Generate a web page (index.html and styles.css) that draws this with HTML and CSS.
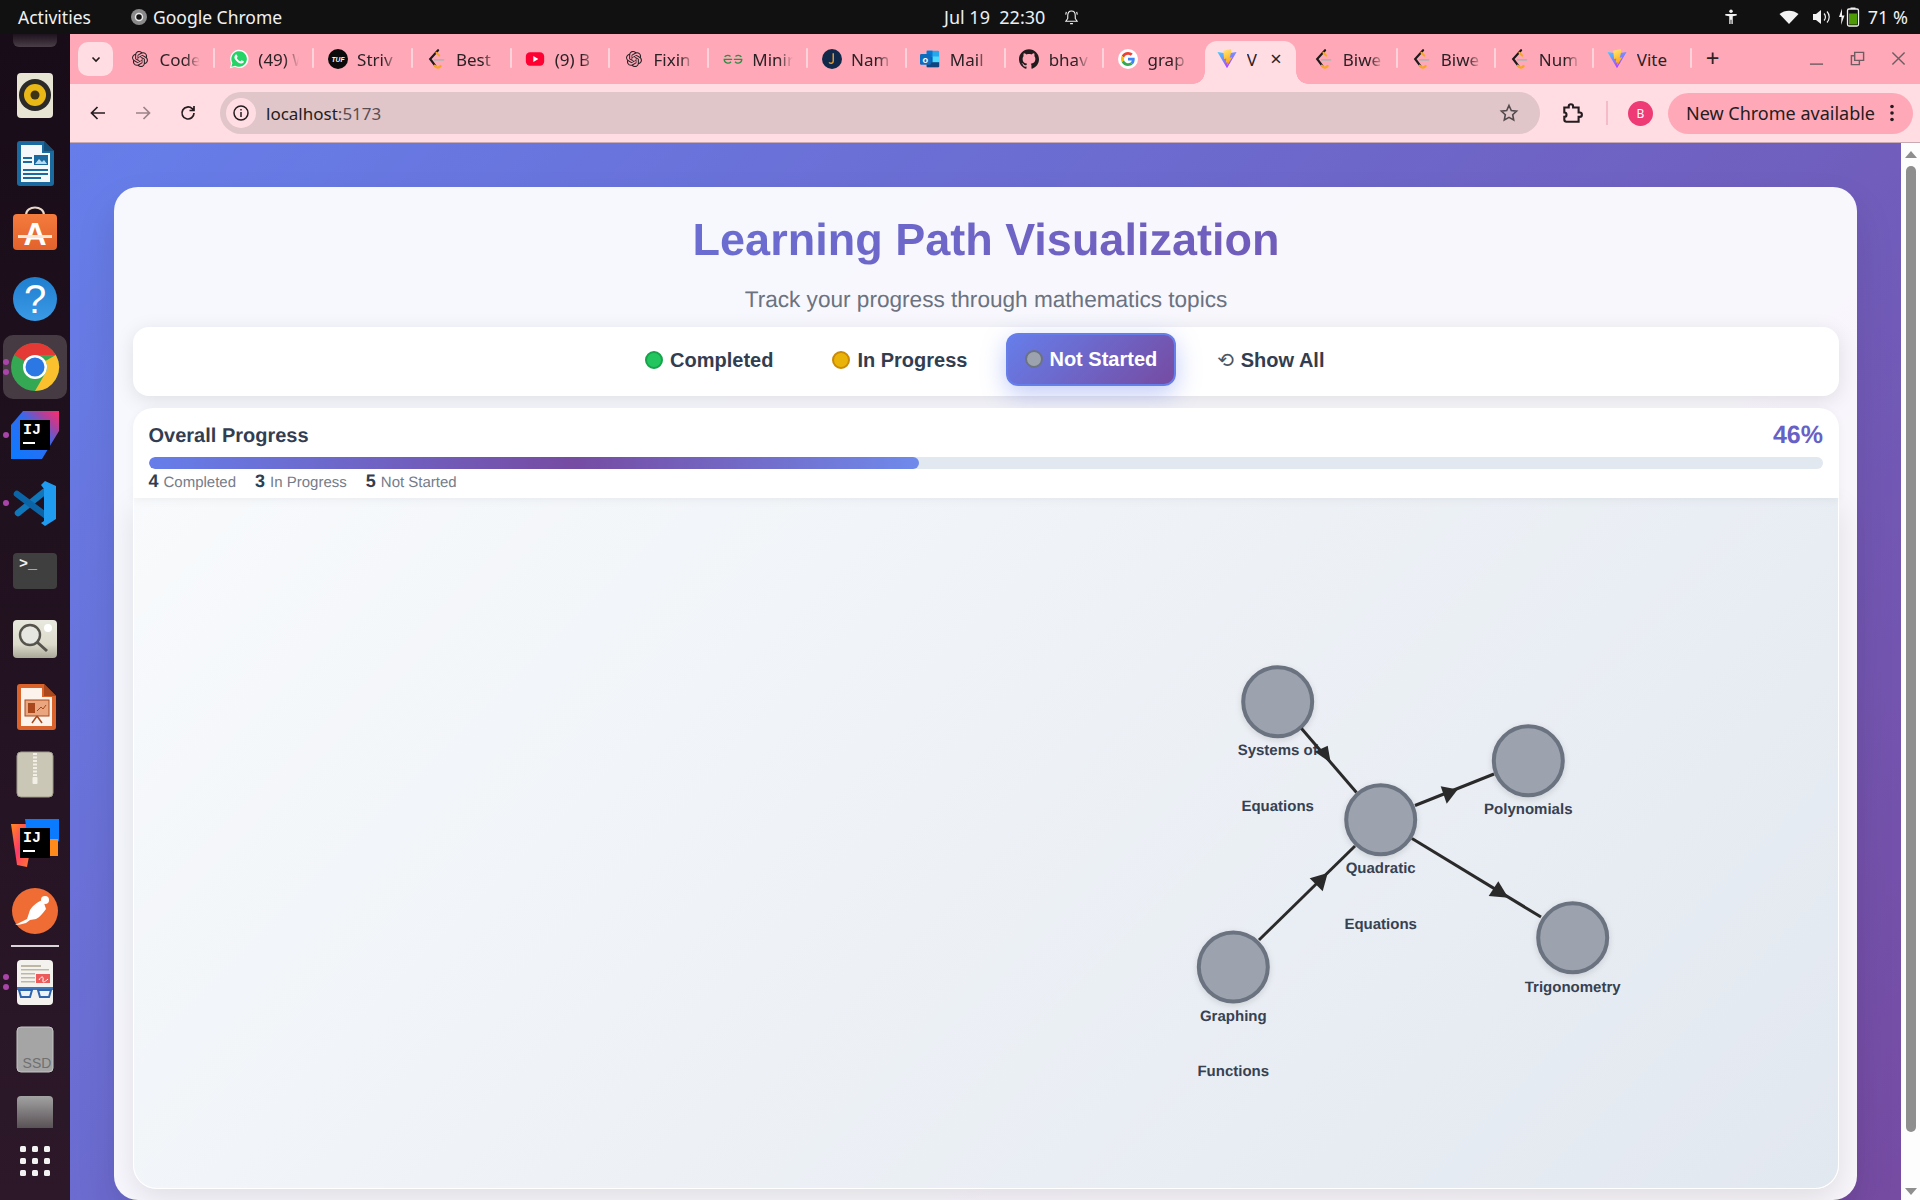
FILE: index.html
```html
<!DOCTYPE html>
<html lang="en">
<head>
<meta charset="utf-8">
<title>Learning Path Visualization</title>
<link rel="stylesheet" href="styles.css">
</head>
<body>
<svg class="defs" aria-hidden="true">
  <defs>
    <linearGradient id="ij-u" x1="0" y1="1" x2="1" y2="0"><stop offset="0" stop-color="#0a7bff"/><stop offset=".55" stop-color="#2f6cf0"/><stop offset=".8" stop-color="#b0409a"/><stop offset="1" stop-color="#ff2d6e"/></linearGradient>
    <linearGradient id="ij-c" x1="0" y1="0" x2="1" y2="1"><stop offset="0" stop-color="#ff8a1c"/><stop offset=".45" stop-color="#ff3a6a"/><stop offset="1" stop-color="#ff8a1c"/></linearGradient>
    <linearGradient id="bag" x1="0" y1="0" x2="0" y2="1"><stop offset="0" stop-color="#f47b3c"/><stop offset="1" stop-color="#e2622c"/></linearGradient>
    <linearGradient id="help" x1="0" y1="0" x2="0" y2="1"><stop offset="0" stop-color="#1f7fcf"/><stop offset="1" stop-color="#3a9ae6"/></linearGradient>
    <linearGradient id="glass" x1="0" y1="0" x2="0" y2="1"><stop offset="0" stop-color="#e9e8de"/><stop offset=".65" stop-color="#dcdacb"/><stop offset="1" stop-color="#a9a797"/></linearGradient>
    <linearGradient id="ssd2" x1="0" y1="0" x2="0" y2="1"><stop offset="0" stop-color="#a3a3a3"/><stop offset="1" stop-color="#3b3036"/></linearGradient>
    <linearGradient id="vite-a" x1="0" y1="0" x2=".6" y2="1"><stop offset="0" stop-color="#41d1ff"/><stop offset="1" stop-color="#bd34fe"/></linearGradient>
    <linearGradient id="vite-b" x1="0" y1="0" x2=".3" y2="1"><stop offset="0" stop-color="#ffea83"/><stop offset="1" stop-color="#ffa800"/></linearGradient>
    <symbol id="i-openai" viewBox="0 0 24 24"><path fill="#2b2226" d="M22.2819 9.8211a5.9847 5.9847 0 0 0-.5157-4.9108 6.0462 6.0462 0 0 0-6.5098-2.9A6.0651 6.0651 0 0 0 4.9807 4.1818a5.9847 5.9847 0 0 0-3.9977 2.9 6.0462 6.0462 0 0 0 .7427 7.0966 5.98 5.98 0 0 0 .511 4.9107 6.051 6.051 0 0 0 6.5146 2.9001A5.9847 5.9847 0 0 0 13.2599 24a6.0557 6.0557 0 0 0 5.7718-4.2058 5.9894 5.9894 0 0 0 3.9977-2.9001 6.0557 6.0557 0 0 0-.7475-7.0729zm-9.022 12.6081a4.4755 4.4755 0 0 1-2.8764-1.0408l.1419-.0804 4.7783-2.7582a.7948.7948 0 0 0 .3927-.6813v-6.7369l2.02 1.1686a.071.071 0 0 1 .038.052v5.5826a4.504 4.504 0 0 1-4.4945 4.4944zm-9.6607-4.1254a4.4708 4.4708 0 0 1-.5346-3.0137l.142.0852 4.783 2.7582a.7712.7712 0 0 0 .7806 0l5.8428-3.3685v2.3324a.0804.0804 0 0 1-.0332.0615L9.74 19.9502a4.4992 4.4992 0 0 1-6.1408-1.6464zM2.3408 7.8956a4.485 4.485 0 0 1 2.3655-1.9728V11.6a.7664.7664 0 0 0 .3879.6765l5.8144 3.3543-2.0201 1.1685a.0757.0757 0 0 1-.071 0l-4.8303-2.7865A4.504 4.504 0 0 1 2.3408 7.872zm16.5963 3.8558L13.1038 8.364 15.1192 7.2a.0757.0757 0 0 1 .071 0l4.8303 2.7913a4.4944 4.4944 0 0 1-.6765 8.1042v-5.6772a.79.79 0 0 0-.407-.667zm2.0107-3.0231l-.142-.0852-4.7735-2.7818a.7759.7759 0 0 0-.7854 0L9.409 9.2297V6.8974a.0662.0662 0 0 1 .0284-.0615l4.8303-2.7866a4.4992 4.4992 0 0 1 6.6802 4.66zM8.3065 12.863l-2.02-1.1638a.0804.0804 0 0 1-.038-.0567V6.0742a4.4992 4.4992 0 0 1 7.3757-3.4537l-.142.0805L8.704 5.459a.7948.7948 0 0 0-.3927.6813zm1.0976-2.3654l2.602-1.4998 2.6069 1.4998v2.9994l-2.5974 1.4997-2.6067-1.4997Z"/></symbol>
    <symbol id="i-wa" viewBox="0 0 24 24"><path fill="#fff" d="M1 23l1.7-6A11 11 0 1 1 7 21.4z"/><path fill="#25d366" d="M2.8 21.2l1.3-4.5A9.3 9.3 0 1 1 7.4 20z"/><path fill="#fff" d="M8.6 6.6c-.3 0-.8.1-1.1.6-.5.6-1 1.5-1 2.7 0 1.500 1 3 2.500 4.600 1.600 1.600 3.400 2.700 5.200 3 1.300.2 2.300-.3 3-1 .5-.5.7-1.300.6-1.800-.1-.3-2.300-1.300-2.700-1.300-.5 0-1 1.300-1.500 1.300-1 0-3.900-2.400-4.300-4 0-.5 1-1 1-1.500 0-.4-1-2.600-1.200-2.600z"/></symbol>
    <symbol id="i-tuf" viewBox="0 0 24 24"><circle cx="12" cy="12" r="12" fill="#0b0b0b"/><text x="12" y="15" text-anchor="middle" class="tuf-text">TUF</text></symbol>
    <symbol id="i-lc" viewBox="0 0 24 24"><path d="M14.500 1.500 5 12l6 8" fill="none" stroke="#1d1a1b" stroke-width="2.600" stroke-linecap="round"/><path d="M10.500 20c2 3 5 3 7 .5" fill="none" stroke="#f5a623" stroke-width="2.800" stroke-linecap="round"/><path d="M12.500 4.500l3.500 3.500" fill="none" stroke="#f5a623" stroke-width="2.400" stroke-linecap="round"/><path d="M10.500 13H21" stroke="#b3b3b3" stroke-width="2.200" stroke-linecap="round"/></symbol>
    <symbol id="i-yt" viewBox="0 0 24 24"><rect x="1" y="4" width="22" height="16" rx="5" fill="#ff0033"/><path d="M10 8.500v7l6-3.500z" fill="#fff"/></symbol>
    <symbol id="i-gfg" viewBox="0 0 24 24"><g fill="none" stroke="#2f8d46" stroke-width="1.600"><path d="M11 12.500H1.500a4.500 4.500 0 0 0 8 2.800M2 9.500a4.500 4.500 0 0 1 7-.5"/><path d="M13 12.500h9.500a4.500 4.500 0 0 1-8 2.800M22 9.500a4.500 4.500 0 0 0-7-.5"/></g></symbol>
    <symbol id="i-nam" viewBox="0 0 24 24"><circle cx="12" cy="12" r="12" fill="#10294a"/><path d="M13.500 5v9.500c0 3-3.500 3.500-5 1.500" fill="none" stroke="#e09a2c" stroke-width="1.800"/></symbol>
    <symbol id="i-mail" viewBox="0 0 24 24"><rect x="8" y="2" width="15" height="20" rx="1.500" fill="#28a8ea"/><path d="M8 2h7v7H8z" fill="#0078d4"/><path d="M15 9h8v7h-8z" fill="#50d9ff"/><path d="M8 9h7v7H8z" fill="#0364b8"/><path d="M8 16h15v5a1 1 0 0 1-1 1H8z" fill="#14447d"/><rect x="0" y="6" width="13" height="13" rx="1.500" fill="#0f6cbd"/><text x="6.500" y="16.500" text-anchor="middle" class="mail-text">o</text></symbol>
    <symbol id="i-gh" viewBox="0 0 24 24"><path fill="#221b1e" d="M12 .297c-6.630 0-12 5.373-12 12 0 5.303 3.438 9.800 8.205 11.385.600.113.820-.258.820-.577 0-.285-.010-1.040-.015-2.040-3.338.724-4.042-1.610-4.042-1.610C4.422 18.070 3.633 17.700 3.633 17.700c-1.087-.744.084-.729.084-.729 1.205.084 1.838 1.236 1.838 1.236 1.070 1.835 2.809 1.305 3.495.998.108-.776.417-1.305.760-1.605-2.665-.300-5.466-1.332-5.466-5.930 0-1.310.465-2.380 1.235-3.220-.135-.303-.540-1.523.105-3.176 0 0 1.005-.322 3.300 1.230.960-.267 1.980-.399 3-.405 1.020.006 2.040.138 3 .405 2.280-1.552 3.285-1.230 3.285-1.230.645 1.653.240 2.873.120 3.176.765.840 1.230 1.910 1.230 3.220 0 4.610-2.805 5.625-5.475 5.920.420.360.810 1.096.810 2.220 0 1.606-.015 2.896-.015 3.286 0 .315.210.690.825.570C20.565 22.092 24 17.592 24 12.297c0-6.627-5.373-12-12-12"/></symbol>
    <symbol id="i-g" viewBox="0 0 48 48"><circle cx="24" cy="24" r="24" fill="#fff"/><g transform="translate(7.200 7.200) scale(.7)"><path fill="#ea4335" d="M24 9.500c3.540 0 6.710 1.220 9.210 3.600l6.850-6.850C35.900 2.380 30.470 0 24 0 14.620 0 6.510 5.380 2.560 13.220l7.980 6.190C12.430 13.720 17.740 9.500 24 9.500z"/><path fill="#4285f4" d="M46.980 24.550c0-1.570-.150-3.090-.380-4.550H24v9.020h12.940c-.580 2.960-2.260 5.480-4.780 7.180l7.730 6c4.510-4.180 7.090-10.360 7.090-17.650z"/><path fill="#fbbc05" d="M10.530 28.590c-.480-1.450-.760-2.990-.760-4.590s.270-3.140.760-4.590l-7.980-6.190C.920 16.460 0 20.120 0 24c0 3.880.920 7.540 2.560 10.780l7.970-6.190z"/><path fill="#34a853" d="M24 48c6.480 0 11.930-2.130 15.890-5.810l-7.730-6c-2.150 1.450-4.920 2.300-8.160 2.300-6.260 0-11.570-4.220-13.470-9.910l-7.980 6.190C6.510 42.620 14.620 48 24 48z"/></g></symbol>
    <symbol id="i-vite" viewBox="0 0 24 24"><path d="M.5 3.500 12 5.500 23.500 3.500 12 23z" fill="url(#vite-a)"/><path d="M16.500 0 7.500 2l1 10 2.700-.6-.7 5 2.200-.6-.5 4 6-10-3 .6 2-7.500z" fill="url(#vite-b)"/></symbol>
  </defs>
</svg>

<div class="topbar">
  <span class="top-activities">Activities</span>
  <span class="top-app">
    <svg class="top-chrome" viewBox="0 0 16 16"><circle cx="8" cy="8" r="8" fill="#8a8a8a"/><circle cx="8" cy="8" r="3.500" fill="#111" stroke="#e8e8e8" stroke-width="1.500"/></svg>
    Google Chrome
  </span>
  <span class="top-clock">Jul 19&nbsp; 22:30</span>
  <svg class="top-bell" viewBox="0 0 16 18"><path d="M8 2c-3 0-4 2.500-4 5v3l-2 3h12l-2-3V7c0-2.500-1-5-4-5zM6.500 15.500h3M2.500 3 1.800 6M13.500 3l.7 3" fill="none" stroke="#f2f2f2" stroke-width="1.200"/></svg>
  <span class="top-status">
    <svg class="top-access" viewBox="0 0 16 18"><circle cx="8" cy="2.500" r="2" fill="#f2f2f2"/><path d="M1.500 5.500h13v1.800L10 8v9H8.500v-5h-1v5H6V8L1.500 7.300z" fill="#f2f2f2"/></svg>
    <svg class="top-wifi" viewBox="0 0 20 16"><path d="M10 15 .5 5C5.500.5 14.500.5 19.500 5z" fill="#f2f2f2"/></svg>
    <svg class="top-vol" viewBox="0 0 20 16"><path d="M1 5h3l5-4v14l-5-4H1z" fill="#f2f2f2"/><path d="M12 4.500a5 5 0 0 1 0 7M15 2.500a8 8 0 0 1 0 11" fill="none" stroke="#f2f2f2" stroke-width="1.200"/></svg>
    <svg class="top-batt" viewBox="0 0 22 20"><path d="M4 1.500 1 10h2.500L3 18l3.500-9.500H4z" fill="#f2f2f2"/><rect x="9.500" y="2" width="11" height="17" rx="1.500" fill="none" stroke="#f2f2f2" stroke-width="1.300"/><rect x="12.500" y=".5" width="5" height="1.500" fill="#f2f2f2"/><rect x="11" y="6.500" width="8" height="11" fill="#4e9a06"/></svg>
    <span class="top-pct">71 %</span>
  </span>
</div>

<div class="desk">
  <nav class="dock">
    <div class="dock-stub"></div>
    <div class="dock-item"><svg class="dock-icon" viewBox="0 0 64 64"><rect x="14" y="10" width="36" height="45" rx="4" fill="#e8e4d4"/><circle cx="32" cy="32" r="16" fill="#2c2a28"/><circle cx="32" cy="32" r="11" fill="#eab816"/><circle cx="32" cy="32" r="4.500" fill="#3d3418"/></svg></div>
    <div class="dock-item"><svg class="dock-icon" viewBox="0 0 64 64"><path d="M17 10h24l10 10v32a3 3 0 0 1-3 3H17a3 3 0 0 1-3-3V13a3 3 0 0 1 3-3z" fill="#1b6a9f"/><path d="M18 14h21v8h8v29H18z" fill="#f4f8fb"/><path d="M41 10l10 10H41z" fill="#134f78"/><g fill="#1b6a9f"><rect x="20" y="26" width="9" height="2"/><rect x="20" y="30" width="9" height="2"/><rect x="20" y="38" width="25" height="2"/><rect x="20" y="42" width="25" height="2"/><rect x="20" y="46" width="18" height="2"/></g><path d="M31 24h14v10H31z" fill="#1b6a9f"/><path d="M32 33l4-5 3 3 2-2 3 4z" fill="#bcdcf0"/></svg></div>
    <div class="dock-item"><svg class="dock-icon" viewBox="0 0 64 64"><path d="M23 16c0-10 18-10 18 0" fill="none" stroke="#e9d7c8" stroke-width="2"/><rect x="10" y="15" width="44" height="36" rx="4" fill="url(#bag)"/><text x="32" y="46" text-anchor="middle" class="dock-a">A</text><rect x="15" y="36" width="34" height="3" fill="#fbe6d8"/></svg></div>
    <div class="dock-item"><svg class="dock-icon" viewBox="0 0 64 64"><circle cx="32" cy="32" r="22" fill="url(#help)"/><text x="32" y="46" text-anchor="middle" class="dock-q">?</text></svg></div>
    <div class="dock-item dock-item--active"><i class="dock-dot dock-dot--a"></i><i class="dock-dot dock-dot--b"></i><svg class="dock-icon" viewBox="0 0 64 64"><circle cx="32" cy="32" r="24" fill="#34a853"/><path d="M52.800 20a24 24 0 0 1-20.800 36l10.400-18a12 12 0 0 0 0-12z" fill="#fbc02d"/><path d="M32 8a24 24 0 0 1 20.800 12H32a12 12 0 0 0-10.400 6L11.200 20A24 24 0 0 1 32 8z" fill="#e53935"/><circle cx="32" cy="32" r="12" fill="#fff"/><circle cx="32" cy="32" r="9.500" fill="#2b78e4"/></svg></div>
    <div class="dock-item"><i class="dock-dot dock-dot--one"></i><svg class="dock-icon" viewBox="0 0 64 64"><path d="M20 8h36v20L39 56H8V22z" fill="url(#ij-u)"/><rect x="17" y="17" width="30" height="30" fill="#000"/><text x="20" y="31" class="dock-ij">IJ</text><rect x="20" y="39" width="12" height="2" fill="#fff"/></svg></div>
    <div class="dock-item"><i class="dock-dot dock-dot--one"></i><svg class="dock-icon" viewBox="0 0 64 64"><path d="M41 21 15 42" stroke="#1177bb" stroke-width="6.500" stroke-linecap="round"/><path d="M14 23l28 21" stroke="#0b64a6" stroke-width="6.500" stroke-linecap="round"/><path d="M38 14l4-4 11 5v33l-11 7-4-3 3-2V18z" fill="#1f9cf0"/></svg></div>
    <div class="dock-item"><svg class="dock-icon" viewBox="0 0 64 64"><rect x="10" y="14" width="44" height="36" rx="4" fill="#3f3f3f"/><text x="16" y="29" class="dock-term">&gt;_</text></svg></div>
    <div class="dock-item"><svg class="dock-icon" viewBox="0 0 64 64"><rect x="10" y="13" width="44" height="38" rx="4" fill="url(#glass)"/><circle cx="27" cy="28" r="10" fill="#e7e7e2" stroke="#56524c" stroke-width="2.400"/><path d="M34.500 35.500 44 44" stroke="#56524c" stroke-width="3"/><circle cx="45" cy="21" r="4" fill="#fff"/></svg></div>
    <div class="dock-item"><svg class="dock-icon" viewBox="0 0 64 64"><path d="M17 9h24l12 12v31a3 3 0 0 1-3 3H17a3 3 0 0 1-3-3V12a3 3 0 0 1 3-3z" fill="#d9632a"/><path d="M18 13h21v9h10v29H18z" fill="#fbf3ec"/><path d="M41 9l12 12H41z" fill="#a8481c"/><rect x="22" y="25" width="24" height="16" fill="#e9a67f" stroke="#a8481c"/><rect x="25" y="28" width="7" height="10" fill="#a8481c"/><path d="M34 36l4-4 2 2 3-4" fill="none" stroke="#a8481c"/><path d="M34 41l-5 7M34 41l5 7" stroke="#a8481c" stroke-width="1.500"/></svg></div>
    <div class="dock-item"><svg class="dock-icon" viewBox="0 0 64 64"><rect x="14" y="9" width="36" height="45" rx="4" fill="#cbc7b7" stroke="#a09c8d"/><path d="M32 10v24" stroke="#f1efe6" stroke-width="4" stroke-dasharray="2 1.500"/><rect x="29.500" y="34" width="5" height="7" rx="1" fill="#f1efe6"/></svg></div>
    <div class="dock-item"><svg class="dock-icon" viewBox="0 0 64 64"><path d="M8 13h24l-8 43-10-2z" fill="url(#ij-c)"/><path d="M22 8h34v22l-10 6H26z" fill="#0a7bff"/><path d="M44 28h11v17H44z" fill="#ff8a1c"/><rect x="17" y="17" width="30" height="30" fill="#000"/><text x="20" y="31" class="dock-ij">IJ</text><rect x="20" y="39" width="12" height="2" fill="#fff"/></svg></div>
    <div class="dock-item"><svg class="dock-icon" viewBox="0 0 64 64"><circle cx="32" cy="32" r="23" fill="#ef6c35"/><path d="M12 46l12-6 3-9c3-5 9-9 13-10l3 9c-3 4-6 8-10 10l-6 1-4 3c-4 1-8 2-11 2z" fill="#fff"/><circle cx="42" cy="21" r="4" fill="#fff"/></svg></div>
    <div class="dock-rule"></div>
    <div class="dock-item"><i class="dock-dot dock-dot--a"></i><i class="dock-dot dock-dot--b"></i><svg class="dock-icon" viewBox="0 0 64 64"><rect x="14" y="10" width="36" height="45" rx="4" fill="#f3f2ee"/><g fill="#bdb7a3"><rect x="18" y="15" width="20" height="2"/><rect x="18" y="19" width="28" height="1.500"/><rect x="18" y="23" width="14" height="1.500"/><rect x="18" y="27" width="14" height="1.500"/><rect x="18" y="31" width="14" height="1.500"/></g><rect x="33" y="24" width="14" height="9" fill="#ec5a5a"/><path d="M36 30c2-4 5-4 4 0s3 1 5-1" fill="none" stroke="#fff"/><path d="M14 37h36v3H14z" fill="#3f74b8"/><path d="M16 40h13l-2 7h-9zM35 40h13l-2 7h-9z" fill="#eef3f8" stroke="#2f65ad" stroke-width="2"/></svg></div>
    <div class="dock-item"><svg class="dock-icon" viewBox="0 0 64 64"><rect x="14" y="9" width="36" height="45" rx="4" fill="#a5a5a5" stroke="#c5c5c5"/><text x="34" y="50" text-anchor="middle" class="dock-ssd">SSD</text></svg></div>
    <div class="dock-item dock-item--clip"><svg class="dock-icon" viewBox="0 0 64 64"><rect x="14" y="10" width="36" height="45" rx="4" fill="url(#ssd2)"/></svg></div>
    <div class="dock-grid"><i></i><i></i><i></i><i></i><i></i><i></i><i></i><i></i><i></i></div>
  </nav>

  <div class="browser">
    <div class="tabstrip">
      <button class="tab-menu"><svg viewBox="0 0 12 12" class="tab-menu-icon"><path d="M2.500 4.500 6 8l3.500-3.500" fill="none" stroke="#221b1e" stroke-width="1.600"/></svg></button>
      <div class="tabs">
        <div class="tab"><svg class="fav"><use href="#i-openai"/></svg><span class="tab-title">Code</span><i class="tab-sep"></i></div>
        <div class="tab"><svg class="fav fav--lg"><use href="#i-wa"/></svg><span class="tab-title">(49) W</span><i class="tab-sep"></i></div>
        <div class="tab"><svg class="fav fav--lg"><use href="#i-tuf"/></svg><span class="tab-title">Striv</span><i class="tab-sep"></i></div>
        <div class="tab"><svg class="fav fav--lg"><use href="#i-lc"/></svg><span class="tab-title">Best</span><i class="tab-sep"></i></div>
        <div class="tab"><svg class="fav fav--lg"><use href="#i-yt"/></svg><span class="tab-title">(9) B</span><i class="tab-sep"></i></div>
        <div class="tab"><svg class="fav"><use href="#i-openai"/></svg><span class="tab-title">Fixin</span><i class="tab-sep"></i></div>
        <div class="tab"><svg class="fav fav--lg"><use href="#i-gfg"/></svg><span class="tab-title">Minir</span><i class="tab-sep"></i></div>
        <div class="tab"><svg class="fav fav--lg"><use href="#i-nam"/></svg><span class="tab-title">Nam</span><i class="tab-sep"></i></div>
        <div class="tab"><svg class="fav fav--lg"><use href="#i-mail"/></svg><span class="tab-title">Mail</span><i class="tab-sep"></i></div>
        <div class="tab"><svg class="fav fav--lg"><use href="#i-gh"/></svg><span class="tab-title">bhav</span><i class="tab-sep"></i></div>
        <div class="tab"><svg class="fav fav--lg"><use href="#i-g"/></svg><span class="tab-title">grap</span></div>
        <div class="tab tab--active"><svg class="fav fav--lg"><use href="#i-vite"/></svg><span class="tab-title tab-title--short">V</span><span class="tab-close">×</span></div>
        <div class="tab tab--late"><svg class="fav fav--lg"><use href="#i-lc"/></svg><span class="tab-title">Biwe</span><i class="tab-sep"></i></div>
        <div class="tab tab--late"><svg class="fav fav--lg"><use href="#i-lc"/></svg><span class="tab-title">Biwe</span><i class="tab-sep"></i></div>
        <div class="tab tab--late"><svg class="fav fav--lg"><use href="#i-lc"/></svg><span class="tab-title">Num</span><i class="tab-sep"></i></div>
        <div class="tab tab--late"><svg class="fav fav--lg"><use href="#i-vite"/></svg><span class="tab-title tab-title--nofade">Vite</span><i class="tab-sep"></i></div>
      </div>
      <span class="tab-new">+</span>
      <div class="winctl">
        <svg viewBox="0 0 16 16" class="win-icon"><path d="M1 14h14" stroke="#6d5c62" stroke-width="1.500"/></svg>
        <svg viewBox="0 0 16 16" class="win-icon"><path d="M5 1.500h9.500V10H5zM5 5H1.500v9.500H10V10" fill="none" stroke="#6d5c62" stroke-width="1.500"/></svg>
        <svg viewBox="0 0 16 16" class="win-icon"><path d="M1.500 1.500l13 13M14.500 1.500l-13 13" stroke="#6d5c62" stroke-width="1.500"/></svg>
      </div>
    </div>

    <div class="toolbar">
      <svg viewBox="0 0 18 18" class="tool-icon"><path d="M16 9H3M8.500 3 2.500 9l6 6" fill="none" stroke="#241c20" stroke-width="1.700"/></svg>
      <svg viewBox="0 0 18 18" class="tool-icon tool-icon--dim"><path d="M2 9h13M9.500 3l6 6-6 6" fill="none" stroke="#9a8488" stroke-width="1.700"/></svg>
      <svg viewBox="0 0 18 18" class="tool-icon tool-icon--last"><path d="M15 9a6 6 0 1 1-1.800-4.300L15 6.500M15 2v4.500h-4.500" fill="none" stroke="#241c20" stroke-width="1.700"/></svg>
      <div class="omnibox">
        <span class="omni-chip"><svg viewBox="0 0 18 18" class="omni-info"><circle cx="9" cy="9" r="7" fill="none" stroke="#241c20" stroke-width="1.500"/><path d="M9 8v5M9 5v1.500" stroke="#241c20" stroke-width="1.500"/></svg></span>
        <span class="omni-url">localhost<span class="omni-port">:5173</span></span>
        <svg viewBox="0 0 20 20" class="omni-star"><path d="M10 2.500l2.300 5 5.300.6-3.900 3.600 1 5.300-4.700-2.600L5.300 17l1-5.300-3.900-3.600 5.300-.6z" fill="none" stroke="#544a4e" stroke-width="1.600"/></svg>
      </div>
      <svg viewBox="0 0 20 20" class="tool-ext"><path d="M3 5h4V4a2 2 0 0 1 4 0v1h5v4.500h1a2 2 0 0 1 0 4h-1V18H5a2 2 0 0 1-2-2v-2.500a2 2 0 0 0 0-4z" fill="none" stroke="#241c20" stroke-width="1.900"/></svg>
      <i class="tool-sep"></i>
      <span class="avatar">B</span>
      <div class="update-pill"><span>New Chrome available</span><svg viewBox="0 0 6 20" class="update-dots"><circle cx="3" cy="3.500" r="1.800" fill="#241c20"/><circle cx="3" cy="10" r="1.800" fill="#241c20"/><circle cx="3" cy="16.500" r="1.800" fill="#241c20"/></svg></div>
    </div>

    <div class="viewport">
      <main class="page">
        <section class="card">
          <h1 class="title">Learning Path Visualization</h1>
          <p class="subtitle">Track your progress through mathematics topics</p>

          <div class="filters">
            <button class="filter"><i class="status-dot status-dot--done"></i>Completed</button>
            <button class="filter"><i class="status-dot status-dot--doing"></i>In Progress</button>
            <button class="filter filter--active"><i class="status-dot status-dot--todo"></i>Not Started</button>
            <button class="filter filter--last"><span class="filter-reset">⟲</span>Show All</button>
          </div>

          <div class="progress">
            <div class="progress-head"><span class="progress-title">Overall Progress</span><span class="progress-pct">46%</span></div>
            <div class="progress-track"><div class="progress-fill" style="width:46%"></div></div>
            <div class="stats">
              <span class="stat"><b>4</b>Completed</span>
              <span class="stat"><b>3</b>In Progress</span>
              <span class="stat"><b>5</b>Not Started</span>
            </div>
          </div>

          <div class="graph">
            <svg class="graph-svg" viewBox="0 0 1704 689">
              <g class="node"><circle cx="1143.700" cy="202.700" r="34.500"/><text x="1143.700" y="256">Systems of</text><text x="1143.700" y="312">Equations</text></g>
              <g class="node"><circle cx="1246.700" cy="320.700" r="34.500"/><text x="1246.700" y="374">Quadratic</text><text x="1246.700" y="430">Equations</text></g>
              <g class="node"><circle cx="1394.300" cy="261.700" r="34.500"/><text x="1394.300" y="315">Polynomials</text></g>
              <g class="node"><circle cx="1438.700" cy="438.700" r="34.500"/><text x="1438.700" y="493">Trigonometry</text></g>
              <g class="node"><circle cx="1099.300" cy="468" r="34.500"/><text x="1099.300" y="522">Graphing</text><text x="1099.300" y="577">Functions</text></g>
              <g class="edge">
                <path d="M1167.500 229.500 1222.500 293.500"/><polygon points="1196.700,263.700 1193.700,246.700 1180.700,252.700"/>
                <path d="M1125 441 1221 347"/><polygon points="1193.700,374 1175.700,379.300 1188.700,392.300"/>
                <path d="M1281 306.500 1360 275"/><polygon points="1323.700,290.500 1306.700,287.300 1312.700,304.700"/>
                <path d="M1278 339.500 1407 418"/><polygon points="1374.300,398.700 1364.300,382.300 1354.700,397"/>
              </g>
            </svg>
          </div>
        </section>
      </main>
      <div class="scrollbar">
        <i class="sb-up"></i>
        <div class="sb-track"><div class="sb-thumb"></div></div>
        <i class="sb-down"></i>
      </div>
    </div>
  </div>
</div>
</body>
</html>
```
FILE: styles.css
```css
* { box-sizing: border-box; }
html, body { margin: 0; height: 1200px; overflow: hidden; }
body { font-family: "Noto Sans", sans-serif; display: flex; flex-direction: column; background: #111; }
button { font: inherit; border: 0; background: none; padding: 0; }
i { font-style: normal; display: block; }
.defs { width: 0; height: 0; position: absolute; }

/* Top bar */
.topbar { height: 34px; flex: none; background: #111; color: #f2f2f2; display: flex; align-items: center; padding-left: 18px; }
.top-activities { width: 113px; font-size: 17.500px; }
.top-app { display: flex; align-items: center; gap: 6px; width: 151px; font-size: 17.500px; white-space: nowrap; }
.top-chrome { width: 16px; height: 16px; flex: none; }
.top-clock { margin-left: 662px; width: 120px; font-size: 18px; color: #e9f0f5; white-space: nowrap; }
.top-bell { width: 15px; height: 17px; }
.top-status { margin-left: auto; display: flex; align-items: center; padding-right: 12px; }
.top-access { width: 14px; height: 18px; margin-right: 40.500px; }
.top-wifi { width: 20px; height: 16px; margin-right: 13px; }
.top-vol { width: 20px; height: 16px; margin-right: 6.500px; }
.top-batt { width: 22px; height: 20px; margin-right: 7.500px; }
.top-pct { font-size: 18px; }

.desk { flex: 1; display: flex; min-height: 0; }

/* Dock */
.dock { width: 70px; flex: none; background: linear-gradient(180deg, #180c18, #2c1829); display: flex; flex-direction: column; align-items: center; }
.dock-stub { width: 44px; height: 13px; margin-bottom: 14px; background: linear-gradient(180deg, #1d121d, #4a3f48); border-radius: 0 0 6px 6px; flex: none; }
.dock-item { width: 70px; height: 68px; flex: none; display: flex; align-items: center; justify-content: center; position: relative; }
.dock-item--active::before { content: ""; position: absolute; left: 3px; right: 3px; top: 2px; bottom: 2px; background: #463a43; border-radius: 10px; }
.dock-item--clip { height: 44px; align-items: flex-start; padding-top: 2px; overflow: hidden; }
.dock-icon { width: 64px; height: 64px; position: relative; flex: none; }
.dock-dot { position: absolute; left: 3px; width: 6px; height: 6px; border-radius: 50%; background: #a944a9; z-index: 1; }
.dock-dot--a { top: 26px; }
.dock-dot--b { top: 36px; }
.dock-dot--one { top: 31px; }
.dock-rule { width: 48px; height: 2px; margin-bottom: 1px; background: #d9d4d8; flex: none; }
.dock-grid { height: 66px; width: 70px; flex: none; display: grid; grid-template-columns: repeat(3, 6px); grid-auto-rows: 6px; gap: 6px; justify-content: center; align-content: center; }
.dock-grid i { background: #f2f2f2; border-radius: 1.500px; }
.dock-a { font: bold 32px "Liberation Sans", sans-serif; fill: #fff; }
.dock-q { font: 40px "Liberation Sans", sans-serif; fill: #fff; }
.dock-ij { font: bold 15px "Liberation Mono", monospace; fill: #fff; }
.dock-term { font: bold 15px "Liberation Mono", monospace; fill: #f2f2f2; }
.dock-ssd { font: 14px "Liberation Sans", sans-serif; fill: #707070; }
.tuf-text { font: italic bold 8px "Liberation Sans", sans-serif; fill: #fff; }
.mail-text { font: bold 11px "Liberation Sans", sans-serif; fill: #fff; }

/* Browser */
.browser { flex: 1; min-width: 0; display: flex; flex-direction: column; }
.tabstrip { height: 50px; flex: none; background: #ffa9b8; display: flex; align-items: flex-start; padding-left: 8px; }
.tab-menu { width: 35px; height: 34px; margin-top: 8px; flex: none; background: #ffdde3; border-radius: 10px; display: flex; align-items: center; justify-content: center; }
.tab-menu-icon { width: 12px; height: 12px; }
.tabs { display: flex; margin-left: 3.400px; height: 50px; align-items: stretch; }
.tab { width: 98.800px; flex: none; padding-left: 13.600px; display: flex; align-items: center; gap: 9.500px; position: relative; color: #2b2226; font-size: 17px; height: 50px; }
.tab--late { width: 98px; }
.tab--active { width: 91px; margin: 7px 3.500px 0 2px; height: 43px; padding: 0 0 7px 12px; background: #ffdde3; border-radius: 12px 12px 0 0; }
.tab--active::before, .tab--active::after { content: ""; position: absolute; bottom: 0; width: 12px; height: 12px; background: radial-gradient(circle at var(--cx) 0, #ffa9b8 11.500px, #ffdde3 12px); }
.tab--active::before { left: -12px; --cx: 0; }
.tab--active::after { right: -12px; --cx: 100%; }
.fav { width: 16px; height: 16px; flex: none; margin: 0 2px; }
.fav--lg { width: 20px; height: 20px; margin: 0; }
.tab-title { width: 41px; overflow: hidden; white-space: nowrap; flex: none; -webkit-mask-image: linear-gradient(90deg, #000 65%, transparent); mask-image: linear-gradient(90deg, #000 65%, transparent); }
.tab-title--short { width: 11px; -webkit-mask-image: none; mask-image: none; }
.tab-title--nofade { -webkit-mask-image: none; mask-image: none; }
.tab-close { margin-left: 3px; font-size: 20px; line-height: 1; color: #2b2226; }
.tab-sep { position: absolute; right: 0; top: 14px; width: 2px; height: 20px; background: #ffd3db; border-radius: 1px; }
.tab-new { margin-left: 13px; width: 16px; margin-top: 12px; font-size: 24px; line-height: 1; color: #2b2226; text-align: center; }
.winctl { margin-left: auto; display: flex; gap: 26px; padding-right: 14px; margin-top: 17px; }
.win-icon { width: 15px; height: 15px; }

.toolbar { height: 59px; flex: none; background: #ffdde3; border-bottom: 1px solid #c9a9b2; display: flex; align-items: center; padding-left: 19px; }
.tool-icon { width: 18px; height: 18px; flex: none; margin-right: 27px; }
.tool-icon--last { margin-right: 23px; }
.omnibox { width: 1320px; height: 42px; border-radius: 21px; background: #e0c5c9; display: flex; align-items: center; padding-left: 6px; padding-right: 21px; flex: none; }
.omni-chip { width: 30px; height: 30px; border-radius: 50%; background: #ffdde3; display: flex; align-items: center; justify-content: center; flex: none; }
.omni-info { width: 18px; height: 18px; }
.omni-url { margin-left: 10px; font-size: 17px; color: #241c20; }
.omni-port { color: #5a4d52; }
.omni-star { width: 20px; height: 20px; margin-left: auto; }
.tool-ext { width: 22px; height: 22px; margin-left: 21px; flex: none; }
.tool-sep { width: 2px; height: 24px; background: #f5bcc7; margin-left: 23px; flex: none; }
.avatar { width: 25px; height: 25px; border-radius: 50%; background: #ee3a75; color: #fff; font-size: 12px; display: flex; align-items: center; justify-content: center; margin-left: 20px; flex: none; }
.update-pill { width: 245px; height: 41px; margin-left: 15px; border-radius: 21px; background: #ffa9b8; display: flex; align-items: center; padding-left: 18px; font-size: 18px; color: #241c20; flex: none; white-space: nowrap; }
.update-dots { width: 6px; height: 20px; margin-left: auto; margin-right: 18px; }

.viewport { flex: 1; min-height: 0; display: flex; }
.page { flex: 1; min-width: 0; padding: 44px 44px 0; background: linear-gradient(135deg, #667eea 0%, #764ba2 100%); }
.card { height: 1013px; padding: 27px 18px 11px 19px; background: rgba(255,255,255,.95); border-radius: 24px; box-shadow: 0 20px 40px rgba(0,0,0,.1); display: flex; flex-direction: column; font-family: "Liberation Sans", sans-serif; text-rendering: geometricPrecision; }
.title { margin: 0 0 21px; text-align: center; font-size: 45px; line-height: 52px; font-weight: 700; background: linear-gradient(135deg, #667eea, #764ba2); -webkit-background-clip: text; background-clip: text; color: transparent; }
.subtitle { margin: 0 0 14px; text-align: center; font-size: 22.600px; line-height: 26px; color: #6b7280; }

.filters { height: 69px; flex: none; background: #fff; border-radius: 16px; box-shadow: 0 4px 20px rgba(0,0,0,.1); display: flex; align-items: center; justify-content: center; gap: 19px; padding: 0 2.500px 3px 0; }
.filter { height: 53px; padding: 0 18px; display: flex; align-items: center; gap: 7px; border-radius: 12px; font-size: 20px; font-weight: 700; color: #333d50; border: 2px solid transparent; }
.filter--active { padding: 0 17px; gap: 6px; color: #fff; background: linear-gradient(135deg, #667eea, #764ba2) padding-box, linear-gradient(135deg, #667eea, #667eea) border-box; transform: translateY(-1px); box-shadow: 0 8px 25px rgba(102,126,234,.4); }
.filter--last { margin-left: 2.500px; }
.status-dot { width: 18px; height: 18px; border-radius: 50%; border: 2px solid; flex: none; }
.status-dot--done { background: #22c55e; border-color: #16a34a; }
.status-dot--doing { background: #eab308; border-color: #ca8a04; }
.status-dot--todo { background: #9ca3af; border-color: #6b7280; }
.filter-reset { font-size: 20px; font-weight: 400; color: #4b5563; font-family: "DejaVu Sans", sans-serif; width: 16px; display: flex; justify-content: center; }

.progress { height: 90px; flex: none; margin-top: 12px; padding: 14px 16px 0 15.500px; background: #fff; border-radius: 20px 20px 0 0; box-shadow: 0 2px 10px rgba(0,0,0,.05); position: relative; z-index: 1; }
.progress-head { display: flex; justify-content: space-between; align-items: center; height: 28px; margin-bottom: 7px; }
.progress-title { font-size: 20px; font-weight: 700; color: #333d50; }
.progress-pct { font-size: 25px; font-weight: 700; color: #6661c6; margin-bottom: 2px; }
.progress-track { height: 12px; border-radius: 6px; background: #e2e8f0; overflow: hidden; }
.progress-fill { height: 100%; border-radius: 6px; background: linear-gradient(90deg, #667eea 0%, #764ba2 55%, #6f8aec 100%); }
.stats { display: flex; gap: 19px; margin-top: 1px; }
.stat { font-size: 15px; line-height: 22px; color: #757c89; display: flex; align-items: baseline; gap: 5px; }
.stat b { font-size: 18px; color: #333d50; }

.graph { flex: 1; min-height: 0; border: 1px solid #fff; border-top: 0; border-radius: 0 0 24px 24px; background: linear-gradient(135deg, #f8fafc 0%, #e2e8f0 100%); box-shadow: 0 10px 30px rgba(0,0,0,.1); }
.graph-svg { display: block; width: 1704px; height: 689px; margin-top: 1px; }
.node circle { fill: #9ca3af; stroke: #6b7280; stroke-width: 4px; filter: drop-shadow(0 2px 3px rgba(0,0,0,.12)); }
.node text { font: bold 15px "Liberation Sans", sans-serif; fill: #374151; text-anchor: middle; }
.edge path { fill: none; stroke: #2a2a2a; stroke-width: 3px; }
.edge polygon { fill: #2a2a2a; }

.scrollbar { width: 19px; flex: none; background: #fdfdfd; display: flex; flex-direction: column; align-items: center; padding: 8px 0 5px; }
.sb-up, .sb-down { width: 0; height: 0; border-left: 6.500px solid transparent; border-right: 6.500px solid transparent; flex: none; }
.sb-up { border-bottom: 7px solid #8e8e8e; }
.sb-down { border-top: 7px solid #8e8e8e; }
.sb-track { flex: 1; width: 10px; padding-top: 8px; }
.sb-thumb { height: 966px; background: #8e8e8e; border-radius: 5px; }
```
